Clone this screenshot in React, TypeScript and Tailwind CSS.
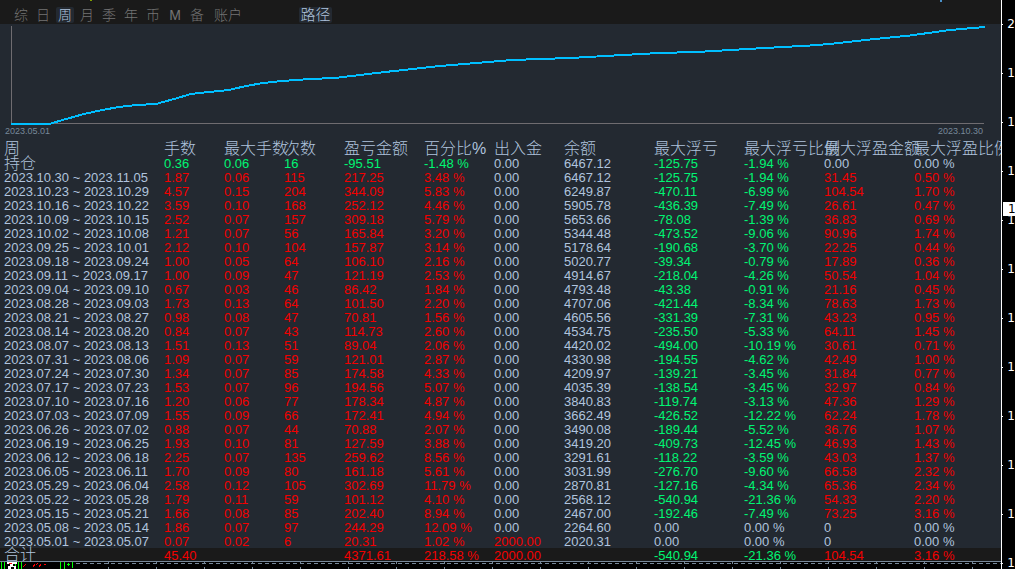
import React from 'react';

const TABS: { label: string; active?: boolean }[] = [
  { label: '综' },
  { label: '日' },
  { label: '周', active: true },
  { label: '月' },
  { label: '季' },
  { label: '年' },
  { label: '币' },
  { label: 'M' },
  { label: '备' },
];

const HEADERS = ['周', '手数', '最大手数', '次数', '盈亏金额', '百分比%', '出入金', '余额', '最大浮亏', '最大浮亏比例', '最大浮盈金额', '最大浮盈比例'];

const ROWS: string[] = [
  '2023.10.30 ~ 2023.11.05|1.87|0.06|115|217.25|3.48 %|0.00|6467.12|-125.75|-1.94 %|31.45|0.50 %',
  '2023.10.23 ~ 2023.10.29|4.57|0.15|204|344.09|5.83 %|0.00|6249.87|-470.11|-6.99 %|104.54|1.70 %',
  '2023.10.16 ~ 2023.10.22|3.59|0.10|168|252.12|4.46 %|0.00|5905.78|-436.39|-7.49 %|26.61|0.47 %',
  '2023.10.09 ~ 2023.10.15|2.52|0.07|157|309.18|5.79 %|0.00|5653.66|-78.08|-1.39 %|36.83|0.69 %',
  '2023.10.02 ~ 2023.10.08|1.21|0.07|56|165.84|3.20 %|0.00|5344.48|-473.52|-9.06 %|90.96|1.74 %',
  '2023.09.25 ~ 2023.10.01|2.12|0.10|104|157.87|3.14 %|0.00|5178.64|-190.68|-3.70 %|22.25|0.44 %',
  '2023.09.18 ~ 2023.09.24|1.00|0.05|64|106.10|2.16 %|0.00|5020.77|-39.34|-0.79 %|17.89|0.36 %',
  '2023.09.11 ~ 2023.09.17|1.00|0.09|47|121.19|2.53 %|0.00|4914.67|-218.04|-4.26 %|50.54|1.04 %',
  '2023.09.04 ~ 2023.09.10|0.67|0.03|46|86.42|1.84 %|0.00|4793.48|-43.38|-0.91 %|21.16|0.45 %',
  '2023.08.28 ~ 2023.09.03|1.73|0.13|64|101.50|2.20 %|0.00|4707.06|-421.44|-8.34 %|78.63|1.73 %',
  '2023.08.21 ~ 2023.08.27|0.98|0.08|47|70.81|1.56 %|0.00|4605.56|-331.39|-7.31 %|43.23|0.95 %',
  '2023.08.14 ~ 2023.08.20|0.84|0.07|43|114.73|2.60 %|0.00|4534.75|-235.50|-5.33 %|64.11|1.45 %',
  '2023.08.07 ~ 2023.08.13|1.51|0.13|51|89.04|2.06 %|0.00|4420.02|-494.00|-10.19 %|30.61|0.71 %',
  '2023.07.31 ~ 2023.08.06|1.09|0.07|59|121.01|2.87 %|0.00|4330.98|-194.55|-4.62 %|42.49|1.00 %',
  '2023.07.24 ~ 2023.07.30|1.34|0.07|85|174.58|4.33 %|0.00|4209.97|-139.21|-3.45 %|31.84|0.77 %',
  '2023.07.17 ~ 2023.07.23|1.53|0.07|96|194.56|5.07 %|0.00|4035.39|-138.54|-3.45 %|32.97|0.84 %',
  '2023.07.10 ~ 2023.07.16|1.20|0.06|77|178.34|4.87 %|0.00|3840.83|-119.74|-3.13 %|47.36|1.29 %',
  '2023.07.03 ~ 2023.07.09|1.55|0.09|66|172.41|4.94 %|0.00|3662.49|-426.52|-12.22 %|62.24|1.78 %',
  '2023.06.26 ~ 2023.07.02|0.88|0.07|44|70.88|2.07 %|0.00|3490.08|-189.44|-5.52 %|36.76|1.07 %',
  '2023.06.19 ~ 2023.06.25|1.93|0.10|81|127.59|3.88 %|0.00|3419.20|-409.73|-12.45 %|46.93|1.43 %',
  '2023.06.12 ~ 2023.06.18|2.25|0.07|135|259.62|8.56 %|0.00|3291.61|-118.22|-3.59 %|43.03|1.37 %',
  '2023.06.05 ~ 2023.06.11|1.70|0.09|80|161.18|5.61 %|0.00|3031.99|-276.70|-9.60 %|66.58|2.32 %',
  '2023.05.29 ~ 2023.06.04|2.58|0.12|105|302.69|11.79 %|0.00|2870.81|-127.16|-4.34 %|65.36|2.34 %',
  '2023.05.22 ~ 2023.05.28|1.79|0.11|59|101.12|4.10 %|0.00|2568.12|-540.94|-21.36 %|54.33|2.20 %',
  '2023.05.15 ~ 2023.05.21|1.66|0.08|85|202.40|8.94 %|0.00|2467.00|-192.46|-7.49 %|73.25|3.16 %',
  '2023.05.08 ~ 2023.05.14|1.86|0.07|97|244.29|12.09 %|0.00|2264.60|0.00|0.00 %|0|0.00 %',
  '2023.05.01 ~ 2023.05.07|0.07|0.02|6|20.31|1.02 %|2000.00|2020.31|0.00|0.00 %|0|0.00 %',
];

const HOLDING = ['持仓', '0.36', '0.06', '16', '-95.51', '-1.48 %', '0.00', '6467.12', '-125.75', '-1.94 %', '0.00', '0.00 %'];
const TOTAL = ['合计', '45.40', '', '', '4371.61', '218.58 %', '2000.00', '', '-540.94', '-21.36 %', '104.54', '3.16 %'];

const NEUTRAL = 'text-[#b0c4de]';
const GAIN = 'text-[#f20000]';
const LOSS = 'text-[#00f573]';

function tone(value: string, column: number, holding: boolean) {
  if (column === 0 || column === 7) return NEUTRAL;
  if (value.startsWith('-')) return LOSS;
  if (parseFloat(value) === 0) return NEUTRAL;
  return holding ? LOSS : GAIN;
}

function Cells({ values, holding = false }: { values: string[]; holding?: boolean }) {
  return (
    <>
      {values.map((value, i) =>
        i === 0 ? (
          <th key={i} scope="row" className={`text-left ${NEUTRAL} ${/\d/.test(value) ? 'font-normal' : 'text-base leading-[10px] font-light'}`}>
            {value}
          </th>
        ) : (
          <td key={i} className={tone(value, i, holding)}>{value}</td>
        ),
      )}
    </>
  );
}

function Chart() {
  return (
    <figure className="h-[116px]">
      <svg viewBox="0 0 1001 102" preserveAspectRatio="none" className="block h-[102px] w-full" role="img" aria-label="余额" shapeRendering="crispEdges">
        <path d="M11.5 2V99.5H984" fill="none" stroke="#6f6c70" />
        <path
          d="M11 100H49L66 95L84 90L102 86L119 83L137 81L156 80L174 75L191 70L209 68L229 66L246 62L263 59L282 57L310 55L335 54L385 48L440 42L512 36L570 34L650 29.5L705 27.5L765 24L810 21.5L830 20L870 15.5L910 11.5L950 6L985 3"
          fill="none"
          stroke="#00bfff"
          strokeWidth="2"
        />
      </svg>
      <figcaption className="flex h-[14px] justify-between pr-[18px] pl-[5px] text-[9px] leading-[11px] text-[#778899]">
        <span>2023.05.01</span>
        <span>2023.10.30</span>
      </figcaption>
    </figure>
  );
}

const PRICES = ['2', '1', '1', '1', '1', '1', '1', '1', '1', '1', '1', '1'];

function PriceAxis() {
  return (
    <aside className="relative w-[14px] shrink-0 overflow-hidden border-l border-white bg-black pt-[17px] font-['DejaVu_Sans','Noto_Sans_CJK_SC',sans-serif] text-xs text-white">
      {PRICES.map((price, i) => (
        <div key={i} className="flex h-[49px] items-start last-of-type:h-[13px]">
          <span className="mt-[7px] h-px w-[2px] bg-white" />
          <span className="ml-1 leading-[15px]">{price}</span>
        </div>
      ))}
      <output className="absolute top-[202px] left-px h-[14px] w-full bg-white pl-[5px] leading-[15px] text-black">1</output>
    </aside>
  );
}

function TimeAxis() {
  return (
    <svg className="block h-[8px] w-full border-t border-[#778899] bg-black" shapeRendering="crispEdges" aria-hidden="true">
      <defs>
        <pattern id="ticks" x="12" width="48" height="8" patternUnits="userSpaceOnUse">
          <path d="M0.5 0V2M0.5 5V7" stroke="#778899" />
        </pattern>
      </defs>
      <path d="M76 1.5H1001" stroke="#778899" strokeDasharray="4 3" />
      <rect x="80" width="100%" height="8" fill="url(#ticks)" />
      <path d="M1.5 0V7M4.5 0V7M15.5 0V7M18.5 0V7M21.5 0V7M60.5 0V7M64.5 0V7M67 2.5H70M68.5 1V4M72.5 0V6" stroke="#00ff00" />
      <path d="M7 0H17V2H13V4H16V7H14V5H11V7H8V4H10V2H7Z" fill="#ffffff" />
      <path d="M9 1L12 2M23 5L26 2M33 5L35 2M36 3L38 1M39 5L41 2M44 3L46 2" stroke="#ff0000" />
    </svg>
  );
}

export default function App() {
  return (
    <div className="flex w-full overflow-hidden bg-black font-['Liberation_Sans','Noto_Sans_CJK_SC',sans-serif]">
      <main className="min-w-0 flex-1 overflow-hidden bg-[#232931]">
        <nav className="relative flex h-6 items-start bg-[#1a1a1a] pt-[7px] pl-3 text-sm leading-4 font-light text-[#747474]">
          {TABS.map((tab) => (
            <button
              key={tab.label}
              type="button"
              className={`mr-1 h-4 w-[18px] rounded-xs text-center ${tab.active ? 'bg-[#232931] text-[#b0c4de]' : ''}`}
            >
              {tab.label}
            </button>
          ))}
          <button type="button" className="h-4 w-9">账户</button>
          <button type="button" className="ml-[53px] h-4 w-[33px] rounded-xs bg-[#232931] text-[15px] text-[#b0c4de]">路径</button>
          <span className="absolute top-0 left-[90px] h-px w-[2px] bg-[#7f9f00]" />
          <span className="absolute top-0 left-[940px] h-[2px] w-[2px] bg-[#4a90c8]" />
        </nav>
        <Chart />
        <table className="w-full table-fixed border-collapse text-[13px] leading-3 whitespace-nowrap">
          <colgroup>
            <col className="w-[164px]" />
            <col className="w-[60px]" />
            <col className="w-[60px]" />
            <col className="w-[60px]" />
            <col className="w-[80px]" />
            <col className="w-[70px]" />
            <col className="w-[70px]" />
            <col className="w-[90px]" />
            <col className="w-[90px]" />
            <col className="w-[80px]" />
            <col className="w-[90px]" />
            <col />
          </colgroup>
          <thead>
            <tr className="h-4 text-base leading-[14px] text-[#b0c4de]">
              {HEADERS.map((header, i) => (
                <th key={i} scope="col" className={`p-0 pt-[2px] text-left font-light ${i === 0 ? 'pl-1' : ''}`}>{header}</th>
              ))}
            </tr>
          </thead>
          <tbody className="[&_td]:p-0 [&_td]:pt-[2px] [&_th]:p-0 [&_th]:pt-[2px] [&_th]:pl-1">
            <tr className="h-[14px]">
              <Cells values={HOLDING} holding />
            </tr>
            {ROWS.map((row) => (
              <tr key={row} className="h-[14px]">
                <Cells values={row.split('|')} />
              </tr>
            ))}
          </tbody>
          <tfoot className="leading-[10px] [&_td]:p-0 [&_td]:pt-[3px] [&_th]:p-0 [&_th]:pt-px [&_th]:pl-1">
            <tr className="h-[13px] bg-[#1a1a1a]">
              <Cells values={TOTAL} />
            </tr>
          </tfoot>
        </table>
        <TimeAxis />
      </main>
      <PriceAxis />
    </div>
  );
}
